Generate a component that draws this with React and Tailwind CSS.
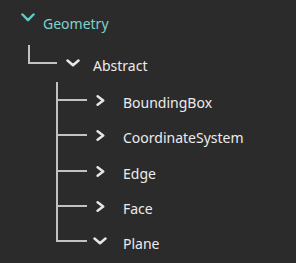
import React from "react";

function Down({ color = "#e6e6e6", h = 8 }) {
  return (
    <svg width="14" height={h} viewBox={`0 0 14 ${h}`} fill="none">
      <path
        d={`M1.5 1.5 L7 ${h - 1.8} L12.5 1.5`}
        stroke={color}
        strokeWidth="2.5"
        strokeLinecap="round"
        strokeLinejoin="round"
      />
    </svg>
  );
}

function Right({ color = "#e6e6e6" }) {
  return (
    <svg width="9" height="11" viewBox="0 0 9 11" fill="none">
      <path
        d="M1.6 1.3 L7.2 5.5 L1.6 9.7"
        stroke={color}
        strokeWidth="2.5"
        strokeLinecap="round"
        strokeLinejoin="round"
      />
    </svg>
  );
}

function ChildRow({ label, open, last, h, top }) {
  return (
    <div className={`flex ${h}`}>
      <div className="flex w-[31px] flex-col">
        <div className={`${top} border-l-2 border-[#c2c2c2]`} />
        <div className="h-[2px] w-full bg-[#c2c2c2]" />
        <div className={`flex-1 ${last ? "" : "border-l-2 border-[#c2c2c2]"}`} />
      </div>
      <div className={`flex ${top === "h-[18px]" ? "h-[38px]" : "h-[36px]"} items-center`}>
        <div className="ml-[5px] flex w-[16px] justify-center">
          {open ? <Down /> : <Right />}
        </div>
        <span className="ml-[15px] translate-y-[3px] text-[14px] leading-[18px] text-[#ececec]">
          {label}
        </span>
      </div>
    </div>
  );
}

export default function App() {
  return (
    <div
      className="flex h-[263px] w-[296px] flex-col bg-[#2b2b2b]"
      style={{ fontFamily: '"Noto Sans", "Open Sans", sans-serif' }}
    >
      <div className="flex h-[45px] items-start pl-[20px] pt-[13px]">
        <div className="flex w-[16px] justify-center">
          <Down color="#5ccdc3" h={9} />
        </div>
        <span className="ml-[7px] mt-[2px] text-[14px] leading-[18px] text-[#7fd3cb]">
          Geometry
        </span>
      </div>
      <div className="flex h-[37px] pl-[28px]">
        <div className="flex w-[29px] flex-col">
          <div className="h-[17px] border-l-2 border-[#c2c2c2]" />
          <div className="h-[2px] w-full bg-[#c2c2c2]" />
        </div>
        <div className="flex h-[36px] items-center">
          <div className="ml-[8px] flex w-[16px] justify-center">
            <Down />
          </div>
          <span className="ml-[12px] translate-y-[3px] text-[14px] leading-[18px] text-[#ececec]">
            Abstract
          </span>
        </div>
      </div>
      <div className="flex flex-col pl-[56px]">
        <ChildRow label="BoundingBox" h="h-[35px]" top="h-[17px]" />
        <ChildRow label="CoordinateSystem" h="h-[35px]" top="h-[17px]" />
        <ChildRow label="Edge" h="h-[36px]" top="h-[18px]" />
        <ChildRow label="Face" h="h-[35px]" top="h-[17px]" />
        <ChildRow label="Plane" h="h-[35px]" top="h-[17px]" open last />
      </div>
    </div>
  );
}
